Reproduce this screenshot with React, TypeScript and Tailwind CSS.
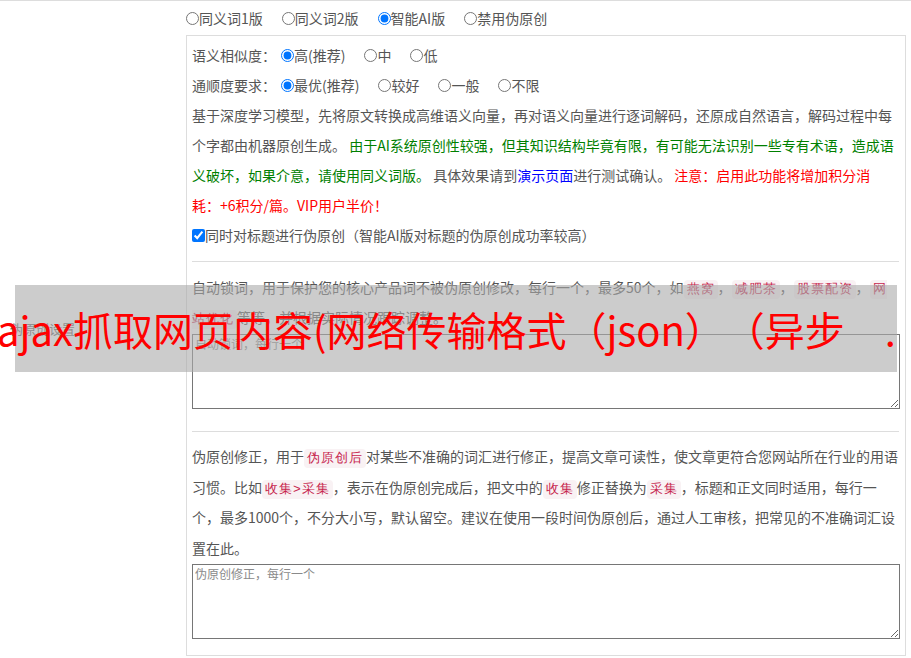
const code = 'rounded-[4px] bg-[#f9f2f4] px-[3px] py-[2px] text-[13px] leading-none tracking-[1px] text-[#c7254e]';

function Radio({ label, checked, name, first }: { label: string; checked?: boolean; name: string; first?: boolean }) {
  return (
    <label className={`inline-flex items-center ${first ? '' : 'ml-[19px]'}`}>
      <input type="radio" name={name} defaultChecked={checked} className="m-0 h-[13px] w-[13px]" />
      {label}
    </label>
  );
}

export default function App() {
  return (
    <div className="relative h-[658px] w-[911px] overflow-hidden bg-white font-['Noto_Sans_CJK_SC','Liberation_Sans',sans-serif] text-[14px] leading-[30px] text-[#555] [text-spacing-trim:space-all]">
      <div className="flex border-t border-[#ddd]">
        {/* 左侧标签 */}
        <div className="flex w-[186px] shrink-0 items-center pl-[10px] text-[13px] text-[#666]">伪原创设置</div>

        <div className="w-[720px]">
          <div className="flex h-[34px] items-center">
            <Radio name="mode" label="同义词1版" first />
            <Radio name="mode" label="同义词2版" />
            <Radio name="mode" label="智能AI版" checked />
            <Radio name="mode" label="禁用伪原创" />
          </div>

          <div className="border border-[#ddd] pb-[16px] pl-[5px] pr-[7px] pt-[4px]">
            <div className="flex h-[30px] items-center">
              <span className="mr-[5px]">语义相似度：</span>
              <Radio name="sim" label="高(推荐)" checked first />
              <Radio name="sim" label="中" />
              <Radio name="sim" label="低" />
            </div>
            <div className="flex h-[30px] items-center">
              <span className="mr-[5px]">通顺度要求：</span>
              <Radio name="flu" label="最优(推荐)" checked first />
              <Radio name="flu" label="较好" />
              <Radio name="flu" label="一般" />
              <Radio name="flu" label="不限" />
            </div>

            <p>
              基于深度学习模型，先将原文转换成高维语义向量，再对语义向量进行逐词解码，还原成自然语言，解码过程中每个字都由机器原创生成。{' '}
              <span className="text-[#008000]">
                由于AI系统原创性较强，但其知识结构毕竟有限，有可能无法识别一些专有术语，造成语义破坏，如果介意，请使用同义词版。
              </span>{' '}
              具体效果请到<a className="text-[#0000ff]">演示页面</a>进行测试确认。{' '}
              <span className="text-[#ff0000]">注意：启用此功能将增加积分消耗：+6积分/篇。VIP用户半价！</span>
            </p>

            <label className="flex h-[30px] items-center">
              <input type="checkbox" defaultChecked className="m-0 h-[13px] w-[13px]" />
              同时对标题进行伪原创（智能AI版对标题的伪原创成功率较高）
            </label>

            <div className="mt-[11px] h-px w-[707px] bg-[#ddd]" />

            <p className="mt-[10px]">
              自动锁词，用于保护您的核心产品词不被伪原创修改，每行一个，最多50个，如<code className={code}>燕窝</code>，
              <code className={code}>减肥茶</code>，<code className={code}>股票配资</code>，<code className={code}>网站优化</code>
              等等，并根据实际情况跟踪调整。
            </p>
            <textarea
              placeholder="自动锁词，每行一个"
              className="mt-[2px] block h-[75px] w-[708px] border border-[#767676] px-[2px] py-[1px] text-[12px] leading-[16px] placeholder:text-[#8a8a8a]"
            />

            <div className="mt-[22px] h-px w-[707px] bg-[#ddd]" />

            <p className="mt-[9px] leading-[30.5px]">
              伪原创修正，用于<code className={code}>伪原创后</code>对某些不准确的词汇进行修正，提高文章可读性，使文章更符合您网站所在行业的用语习惯。比如
              <code className={code}>收集&gt;采集</code>，表示在伪原创完成后，把文中的<code className={code}>收集</code>修正替换为
              <code className={code}>采集</code>，标题和正文同时适用，每行一个，最多1000个，不分大小写，默认留空。建议在使用一段时间伪原创后，通过人工审核，把常见的不准确词汇设置在此。
            </p>
            <textarea
              placeholder="伪原创修正，每行一个"
              className="mt-[1px] block h-[75px] w-[708px] border border-[#767676] px-[2px] py-[1px] text-[12px] leading-[16px] placeholder:text-[#8a8a8a]"
            />
          </div>
        </div>
      </div>

      {/* 水印横幅 */}
      <div className="absolute left-[15px] top-[285px] h-[87px] w-[882px] bg-[#aaaaaa]/60" />
      <div className="absolute left-[-3px] top-[303px] whitespace-nowrap text-[40px] leading-[52px] text-[#ff0000]">
        ajax抓取网页内容(网络传输格式（json）（异步　.
      </div>
    </div>
  );
}
